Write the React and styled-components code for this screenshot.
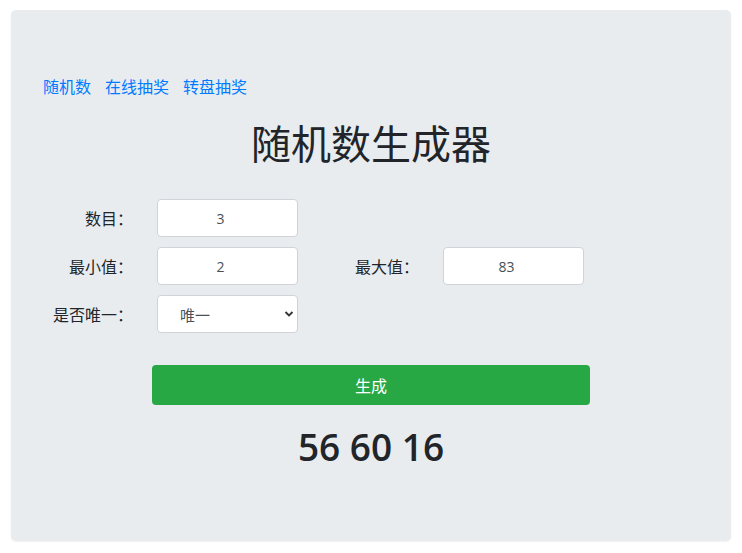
import React, { useState } from 'react'
import styled, { createGlobalStyle } from 'styled-components'

const GlobalStyle = createGlobalStyle`
  html, body {
    margin: 0;
    padding: 0;
    background: #fff;
    font-family: "Open Sans", "Noto Sans CJK SC", sans-serif;
    color: #212529;
  }
  * { box-sizing: border-box; }
`;

const Page = styled.div`
  width: 742px;
  height: 553px;
  padding: 10px 11px 12px 11px;
`;

const Panel = styled.div`
  height: 100%;
  background: #e9ecef;
  border-radius: 5px;
  padding: 64px 32px 0 32px;
  box-shadow: 0 1px 2px rgba(0, 0, 0, 0.06);
`;

const Nav = styled.nav`
  display: flex;
  gap: 14px;
  height: 24px;
  align-items: center;
`;

const NavLink = styled.a`
  color: #007bff;
  font-family: "Noto Sans CJK SC", sans-serif;
  font-size: 16px;
  text-decoration: none;
  cursor: pointer;
`;

const Title = styled.h1`
  margin: 20px 0 33px 0;
  text-align: center;
  font-family: "Noto Sans CJK SC", sans-serif;
  font-weight: 400;
  font-size: 40px;
  line-height: 48px;
  color: #212529;
`;

const Form = styled.div`
  display: flex;
  flex-direction: column;
  gap: 10px;
`;

const Row = styled.div`
  display: grid;
  grid-template-columns: 114px 141px 145px 141px;
  align-items: center;
  height: 38px;
`;

const Label = styled.label`
  text-align: right;
  padding-right: 24px;
  font-family: "Noto Sans CJK SC", sans-serif;
  font-size: 16px;
  color: #212529;
`;

const Input = styled.input`
  width: 141px;
  height: 38px;
  border: 1px solid #ced4da;
  border-radius: 4px;
  background: #fff;
  padding: 0 14px 0 0;
  text-align: center;
  font-family: "Open Sans", "Noto Sans CJK SC", sans-serif;
  font-size: 14px;
  color: #495057;
  outline: none;
`;

const SelectWrap = styled.div`
  position: relative;
  width: 141px;
  height: 38px;
`;

const Select = styled.select`
  appearance: none;
  width: 100%;
  height: 100%;
  border: 1px solid #ced4da;
  border-radius: 4px;
  background: #fff;
  padding-left: 22px;
  font-family: "Noto Sans CJK SC", sans-serif;
  font-size: 15px;
  color: #495057;
  outline: none;
`;

const Chevron = styled.svg`
  position: absolute;
  right: 4px;
  top: 15px;
  pointer-events: none;
`;

const Button = styled.button`
  display: block;
  width: 438px;
  height: 40px;
  margin: 32px auto 0 auto;
  border: none;
  border-radius: 4px;
  background: #28a745;
  color: #fff;
  font-family: "Noto Sans CJK SC", sans-serif;
  font-size: 16px;
  cursor: pointer;
`;

const Result = styled.h2`
  margin: 18px 0 0 0;
  text-align: center;
  font-family: "Open Sans", sans-serif;
  font-weight: 600;
  font-size: 37px;
  line-height: 48px;
  color: #212529;
`;

export default function App() {
  const [count, setCount] = useState('3')
  const [min, setMin] = useState('2')
  const [max, setMax] = useState('83')
  const [unique, setUnique] = useState('1')
  const [result, setResult] = useState('56 60 16')

  const generate = () => {
    const n = parseInt(count) || 0
    const lo = parseInt(min) || 0
    const hi = parseInt(max) || 0
    const out = []
    let guard = 0
    while (out.length < n && guard < 10000) {
      guard++
      const v = lo + Math.floor(Math.random() * (hi - lo + 1))
      if (unique === '1' && out.includes(v)) continue
      out.push(v)
    }
    setResult(out.join(' '))
  }

  return (
    <>
      <GlobalStyle />
      <Page>
        <Panel>
          <Nav>
            <NavLink>随机数</NavLink>
            <NavLink>在线抽奖</NavLink>
            <NavLink>转盘抽奖</NavLink>
          </Nav>
          <Title>随机数生成器</Title>
          <Form>
            <Row>
              <Label>数目：</Label>
              <Input value={count} onChange={(e) => setCount(e.target.value)} />
            </Row>
            <Row>
              <Label>最小值：</Label>
              <Input value={min} onChange={(e) => setMin(e.target.value)} />
              <Label>最大值：</Label>
              <Input value={max} onChange={(e) => setMax(e.target.value)} />
            </Row>
            <Row>
              <Label>是否唯一：</Label>
              <SelectWrap>
                <Select value={unique} onChange={(e) => setUnique(e.target.value)}>
                  <option value="1">唯一</option>
                  <option value="0">不唯一</option>
                </Select>
                <Chevron width="10" height="8" viewBox="0 0 10 8">
                  <path d="M1.5 2 L5 5.5 L8.5 2" fill="none" stroke="#333" strokeWidth="1.8" />
                </Chevron>
              </SelectWrap>
            </Row>
          </Form>
          <Button onClick={generate}>生成</Button>
          <Result>{result}</Result>
        </Panel>
      </Page>
    </>
  )
}
